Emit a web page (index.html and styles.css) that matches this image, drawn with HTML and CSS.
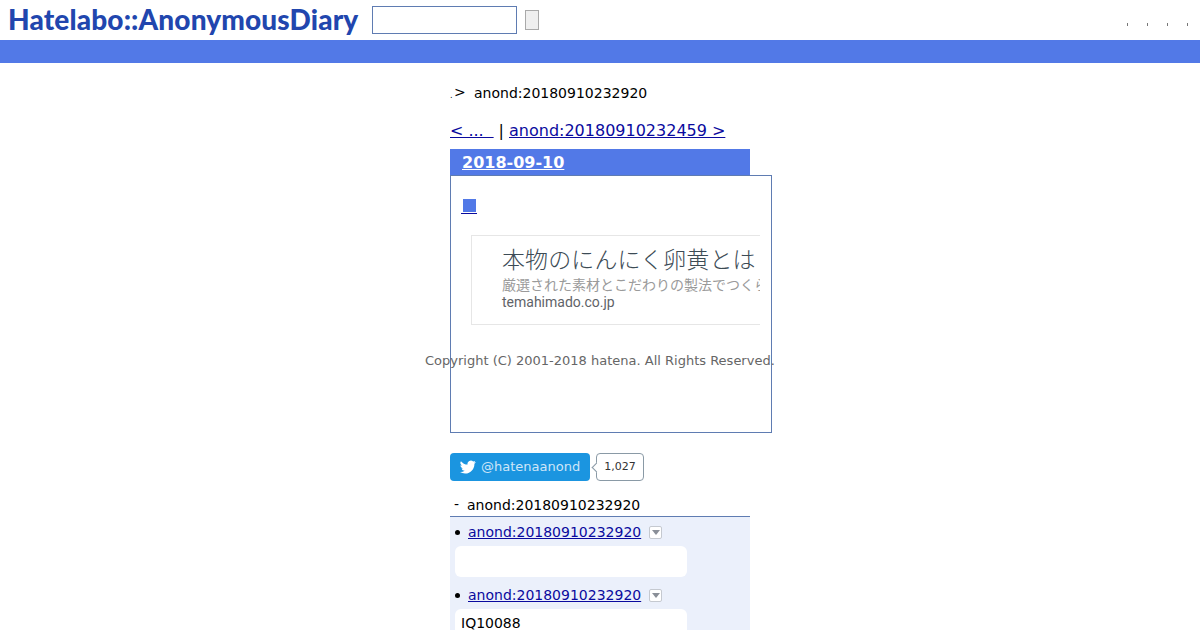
FILE: index.html
```html
<!DOCTYPE html>
<html lang="ja">
<head>
<meta charset="utf-8">
<title>anond:20180910232920</title>
<link rel="stylesheet" href="styles.css">
</head>
<body>
<header class="top">
  <a class="logo">Hatelabo::AnonymousDiary</a>
  <input class="search" type="text">
  <span class="go"></span>
  <div class="dots"><i></i><i></i><i></i><i></i></div>
</header>
<div class="band"></div>
<main class="col">
  <p class="crumb"><span class="tiny">.</span><span class="gt">&gt;</span><span>anond:20180910232920</span></p>
  <p class="pager"><a href="#">&lt; ... &nbsp;</a> | <a href="#">anond:20180910232459 &gt;</a></p>
  <h2 class="date"><a href="#">2018-09-10</a></h2>
  <section class="entry">
    <a class="sq-link" href="#"><span class="sq"></span></a>
    <div class="ad">
      <div class="ad-clip">
        <div class="ad-title">本物のにんにく卵黄とは？</div>
        <div class="ad-desc">厳選された素材とこだわりの製法でつくられた</div>
        <div class="ad-url">temahimado.co.jp</div>
      </div>
    </div>
    <p class="copy">Copyright (C) 2001-2018 hatena. All Rights Reserved.</p>
  </section>
  <div class="tw-row">
    <a class="tw-btn">
      <svg class="bird" viewBox="0 0 24 24"><path d="M23.6 4.6c-.9.4-1.8.6-2.8.8 1-.6 1.8-1.6 2.1-2.7-.9.6-2 1-3.1 1.2a4.9 4.9 0 0 0-8.4 4.5C7.400 8.200 3.800 6.200 1.400 3.200a4.900 4.900 0 0 0 1.500 6.600c-.8 0-1.600-.2-2.200-.6 0 2.400 1.700 4.400 3.900 4.900-.7.2-1.500.2-2.200.1.600 2 2.400 3.400 4.600 3.400A9.900 9.900 0 0 1 0 19.600 14 14 0 0 0 7.600 21.800c9.100 0 14.300-7.700 14-14.600 1-.7 1.800-1.500 2-2.600z"/></svg>
      <span>@hatenaanond</span>
    </a>
    <span class="tw-count">1,027</span>
  </div>
  <h3 class="refs-head"><span class="dash">-</span><span>anond:20180910232920</span></h3>
  <ul class="refs">
    <li>
      <div class="ref-line"><a href="#">anond:20180910232920</a><span class="menu"></span></div>
      <div class="bubble"></div>
    </li>
    <li>
      <div class="ref-line"><a href="#">anond:20180910232920</a><span class="menu"></span></div>
      <div class="bubble">IQ10088</div>
    </li>
  </ul>
</main>
</body>
</html>
```
FILE: styles.css
```css
* { box-sizing: border-box; }
html, body { margin: 0; height: 630px; overflow: hidden; background: #fff; }
body { font-family: "DejaVu Sans", sans-serif; font-size: 14px; color: #000; }
a { color: #0a0a9e; }

.top { height: 40px; display: flex; align-items: center; padding-left: 8px; position: relative; }
.logo { width: 364px; font-family: "Lato", sans-serif; font-weight: 900; font-size: 28px; line-height: 32px; margin-top: -2px; letter-spacing: .14px; color: #2146ae; white-space: nowrap; }
.search { width: 145px; height: 28px; margin: 0 8px 0 0; border: 1px solid #5f7cb2; background: #fff; padding: 0; }
.go { width: 14px; height: 20px; background: #efefef; border: 1px solid #a9a9a9; }
.dots { position: absolute; right: 12px; top: 23px; display: flex; gap: 19px; }
.dots i { width: 1px; height: 3px; background: #777; }

.band { height: 23px; background: #5279e7; }

.col { width: 300px; margin-left: 450px; position: relative; }
.crumb { margin: 0; padding-top: 21px; height: 45px; display: flex; align-items: baseline; line-height: 18px; }
.tiny { width: 4px; font-size: 8px; }
.gt { width: 20px; position: relative; top: -1px; }
.pager { margin: 0; font-size: 16px; height: 41px; padding-top: 13px; line-height: 20px; white-space: nowrap; word-spacing: -.1px; }
.date { margin: 0; height: 27px; background: #5279e7; padding-left: 12px; font-size: 16px; line-height: 27px; font-weight: 700; }
.date a { color: #fff; }

.entry { width: 322px; height: 258px; margin-top: -1px; border: 1px solid #5f7cb2; padding: 23px 10px 0; background: transparent; position: relative; }
.sq-link { display: block; height: 36px; width: 16px; }
.sq { display: block; width: 13px; height: 13px; margin-left: 2px; background: #5279e7; }
.sq-link::after { content: ""; display: block; width: 16px; height: 1px; margin-top: 1px; background: #0a0a9e; }
.ad { width: 289px; height: 90px; margin-left: 10px; border: 1px solid #e6e6e6; border-right: 0; overflow: hidden; }
.ad-clip { padding: 10px 0 0 30px; white-space: nowrap; font-family: "Roboto", "Noto Sans CJK JP", sans-serif; }
.ad-title { font-size: 23px; font-weight: 300; line-height: 30px; letter-spacing: .1px; color: #3c4b55; }
.ad-desc { font-size: 14px; line-height: 18px; color: #9a9a9a; }
.ad-url { font-size: 14px; line-height: 16px; color: #5f6368; }
.copy { position: absolute; left: -26px; top: 177px; margin: 0; font-size: 13px; line-height: 16px; color: #666; white-space: nowrap; }

.tw-row { display: flex; align-items: center; margin-top: 20px; height: 28px; }
.tw-btn { width: 140px; height: 28px; background: #1b95e0; border-radius: 4px; display: flex; align-items: center; gap: 5px; padding: 0 0 1px 10px; color: #cfe6f8; font-size: 13px; }
.bird { width: 16px; height: 16px; fill: #fff; }
.tw-count { position: relative; margin-left: 6px; height: 28px; width: 48px; border: 1px solid #8a9aa6; border-radius: 4px; font-size: 11px; line-height: 26px; text-align: center; color: #333; background: #fff; }
.tw-count::before { content: ""; position: absolute; left: -4px; top: 10px; width: 6px; height: 6px; background: #fff; border-left: 1px solid #8a9aa6; border-bottom: 1px solid #8a9aa6; transform: rotate(45deg); }

.refs-head { margin: 14px 0 0; height: 22px; border-bottom: 1px solid #5f7cb2; font-size: 14px; font-weight: 400; line-height: 18px; display: flex; padding-left: 4px; padding-top: 1px; }
.dash { width: 13px; position: relative; top: -1px; }
.refs { margin: 0; padding: 0; list-style: none; background: #ebf0fb; height: 130px; }
.refs li { padding: 6px 0 7px 5px; height: 63px; position: relative; }
.refs li::before { content: ""; position: absolute; left: 5px; top: 13px; width: 5px; height: 5px; border-radius: 50%; background: #000; }
.ref-line { padding-left: 13px; display: flex; align-items: center; height: 18px; }
.menu { width: 13px; height: 13px; margin-left: 8px; border: 1px solid #c5c9d0; border-radius: 2px; background: #fff; position: relative; }
.menu::after { content: ""; position: absolute; left: 2px; top: 3px; border: 4px solid transparent; border-top: 5px solid #8a8f98; border-bottom: 0; }
.bubble { width: 232px; height: 31px; margin-top: 5px; background: #fff; border-radius: 6px; padding: 4px 6px; line-height: 20px; font-size: 14px; }
```
